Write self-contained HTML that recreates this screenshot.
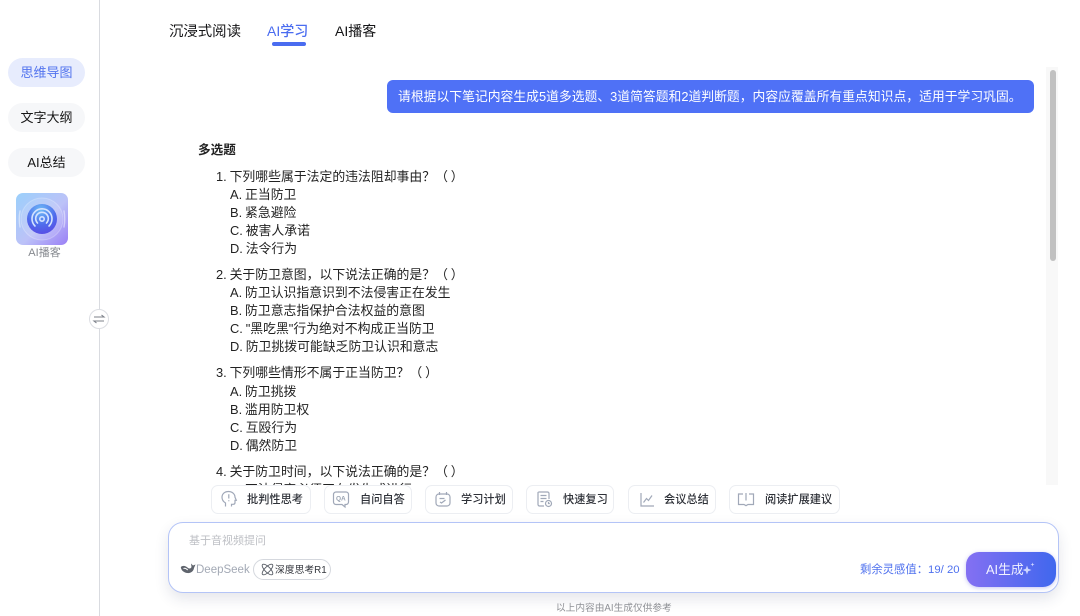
<!DOCTYPE html>
<html lang="zh"><head><meta charset="utf-8"><style>
html,body{margin:0;padding:0;background:#fff}
body{width:1080px;height:616px;overflow:hidden;position:relative;font-family:"Liberation Sans","Noto Sans CJK SC",sans-serif;color:#222}
.a{position:absolute;white-space:nowrap}
.pill{position:absolute;left:8px;width:77px;height:29px;border-radius:15px;background:#f6f7f9;text-align:center;font-size:13px;line-height:30px;color:#161616}
.tab{position:absolute;top:21px;font-size:14px;line-height:20px;color:#141416;white-space:nowrap}
.l{position:absolute;font-size:12.850px;line-height:18px;white-space:nowrap;color:#222;left:230px;word-spacing:-.7px}
.chip{position:absolute;top:485px;height:27px;border:1px solid #eceef2;border-radius:7px;background:#fff;font-size:11.200px;line-height:28px;font-weight:500;color:#2e3138}
.chip span{position:absolute;white-space:nowrap}
.chip svg{position:absolute;top:3px;fill:none;stroke:#a0a8b8;stroke-width:1.2}
</style></head><body>
<div class="a" style="left:99px;top:0;width:1px;height:616px;background:#d9dbe0"></div>
<div class="pill" style="top:58px;background:#e7ecfd;color:#5273ee">思维导图</div>
<div class="pill" style="top:103px">文字大纲</div>
<div class="pill" style="top:148px">AI总结</div>
<svg class="a" style="left:16px;top:193px" width="52" height="52" viewBox="0 0 52 52">
<defs><linearGradient id="g" x1="0" y1="0" x2="1" y2="1"><stop offset="0" stop-color="#9bd0fb"/><stop offset=".55" stop-color="#bcc2f8"/><stop offset="1" stop-color="#9a7ff5"/></linearGradient>
<radialGradient id="h" cx=".45" cy=".2" r=".9"><stop offset="0" stop-color="#6fbcf6"/><stop offset=".55" stop-color="#4f6cec"/><stop offset="1" stop-color="#5a45e4"/></radialGradient></defs>
<rect width="52" height="52" rx="7" fill="url(#g)"/>
<circle cx="26" cy="26" r="21" fill="#fff" fill-opacity=".12" stroke="#fff" stroke-opacity=".25"/>
<circle cx="26" cy="26" r="15" fill="url(#h)"/>
<g fill="none" stroke="#d5e3ff" stroke-width="1.6" stroke-linecap="round"><circle cx="26" cy="26" r="2.2"/><path d="M21.500 30a6.300 6.300 0 1 1 9 0"/><path d="M19 33a10 10 0 1 1 14 0"/></g>
<g fill="none" stroke="#fff" stroke-opacity=".45" stroke-width="1.4" stroke-linecap="round"><path d="M4 18q-1.500 8 0 16M48 18q1.500 8 0 16"/></g>
</svg>
<div class="a" style="left:16px;width:57px;top:246px;text-align:center;font-size:11px;line-height:15px;color:#85888e">AI播客</div>
<svg class="a" style="left:89px;top:309px" width="20" height="20" viewBox="0 0 20 20"><circle cx="10" cy="10" r="9.500" fill="#fff" stroke="#dcdee3"/><g fill="none" stroke="#7d818a" stroke-width="1.100"><path d="M5 8h10l-2.500-2"/><path d="M15 12H5l2.500 2"/></g></svg>

<div class="tab" style="left:169px;top:22px;font-size:14.400px">沉浸式阅读</div>
<div class="tab" style="left:267px;color:#4a6cf0;font-weight:500">AI学习</div>
<div class="a" style="left:272px;top:42px;width:34px;height:3.500px;border-radius:2px;background:#4a6cf0"></div>
<div class="tab" style="left:335px">AI播客</div>

<div class="a" style="left:387px;top:80px;width:647px;height:33px;border-radius:6px;background:#4f71f6;color:#fff;font-size:12.820px;line-height:34px;text-indent:11px">请根据以下笔记内容生成5道多选题、3道简答题和2道判断题，内容应覆盖所有重点知识点，适用于学习巩固。</div>
<div class="a" style="left:1046px;top:67px;width:12px;height:418px;background:#f8f8f8"></div>
<div class="a" style="left:1050px;top:70px;width:6px;height:191px;border-radius:3px;background:#c1c1c1"></div>

<div class="a" style="left:0;top:0;width:1040px;height:485px;overflow:hidden">
<div class="a" style="left:0;top:1px;width:1040px;height:500px">
<div class="l" style="left:198px;top:140px;font-weight:700;font-size:12.600px">多选题</div>
<div class="l" style="left:216px;top:167px">1. 下列哪些属于法定的违法阻却事由？（ ）</div>
<div class="l" style="top:185px">A. 正当防卫</div>
<div class="l" style="top:203px">B. 紧急避险</div>
<div class="l" style="top:221px">C. 被害人承诺</div>
<div class="l" style="top:239px">D. 法令行为</div>
<div class="l" style="left:216px;top:265px">2. 关于防卫意图，以下说法正确的是？（ ）</div>
<div class="l" style="top:283px">A. 防卫认识指意识到不法侵害正在发生</div>
<div class="l" style="top:301px">B. 防卫意志指保护合法权益的意图</div>
<div class="l" style="top:319px">C. "黑吃黑"行为绝对不构成正当防卫</div>
<div class="l" style="top:337px">D. 防卫挑拨可能缺乏防卫认识和意志</div>
<div class="l" style="left:216px;top:363px">3. 下列哪些情形不属于正当防卫？（ ）</div>
<div class="l" style="top:382px">A. 防卫挑拨</div>
<div class="l" style="top:400px">B. 滥用防卫权</div>
<div class="l" style="top:418px">C. 互殴行为</div>
<div class="l" style="top:436px">D. 偶然防卫</div>
<div class="l" style="left:216px;top:462px">4. 关于防卫时间，以下说法正确的是？（ ）</div>
<div class="l" style="top:480px">A. 不法侵害必须正在发生或进行</div>
</div></div>

<div class="chip" style="left:211px;width:98px"><svg style="left:7px" width="20" height="20" viewBox="0 0 20 20"><path d="M6.500 17.500v-3.500C4.300 12.700 3 10.700 3 8.300 3 4.800 5.800 2.500 9.500 2.500s6.500 2.500 6.500 5.800l1.300 3H16v2.500c0 1-.8 1.500-1.800 1.500H12.500v2.200"/><path d="M9.800 5.300v4.200M9.800 11.200v1"/></svg><span style="left:35px">批判性思考</span></div>
<div class="chip" style="left:324px;width:86px"><svg style="left:6px" width="20" height="20" viewBox="0 0 20 20"><path d="M5 3h10a2.500 2.500 0 0 1 2.500 2.500v7.500a2.500 2.500 0 0 1-2.500 2.500h-1V18L11 15.500H5A2.500 2.500 0 0 1 2.500 13V5.500A2.500 2.500 0 0 1 5 3z"/><text x="5" y="11.500" font-size="6.500" font-weight="700" fill="#9aa3b2" stroke="none" font-family="Liberation Sans">QA</text></svg><span style="left:35px">自问自答</span></div>
<div class="chip" style="left:425px;width:86px"><svg style="left:7px" width="20" height="20" viewBox="0 0 20 20"><rect x="3" y="5" width="14" height="12" rx="3"/><path d="M6.500 3v3M13.500 3v3M6.500 9.500h5M7 13l1.500 1 4-3"/></svg><span style="left:35px">学习计划</span></div>
<div class="chip" style="left:526px;width:86px"><svg style="left:8px" width="20" height="20" viewBox="0 0 20 20"><path d="M9 17H4.500A1.500 1.500 0 0 1 3 15.500v-12A1.500 1.500 0 0 1 4.500 3h8A1.500 1.500 0 0 1 14 4.500V10"/><path d="M5.500 6.500h6M5.500 9.500h6M5.500 12.500h3"/><circle cx="13.500" cy="14.500" r="3"/><path d="M13.500 13v1.500h1.300"/></svg><span style="left:36px">快速复习</span></div>
<div class="chip" style="left:628px;width:86px"><svg style="left:9px" width="20" height="20" viewBox="0 0 20 20"><path d="M3 4v13h13M5.500 13.500l3-4 2 2 3.500-5"/></svg><span style="left:35px">会议总结</span></div>
<div class="chip" style="left:729px;width:109px"><svg style="left:6px" width="20" height="20" viewBox="0 0 20 20"><path d="M7 5H2.500v10.500H8l2 1.200 2-1.200h5.500V5H13"/><path d="M10 4v7.500"/></svg><span style="left:35px">阅读扩展建议</span></div>

<div class="a" style="left:168px;top:522px;width:889px;height:69px;border:1px solid #b4c4f7;border-radius:15px;background:#fff;box-shadow:0 6px 14px rgba(40,50,90,.12)"></div>
<div class="a" style="left:189px;top:533px;font-size:11px;line-height:16px;color:#bdbfc4">基于音视频提问</div>
<svg class="a" style="left:180px;top:562px" width="16" height="14" viewBox="0 0 16 14"><path d="M.8 5C3 3 6 4 8 6c1.500 1 3 .5 3.500-1L11 1.500l2 2 2.500-1L14 6c-.5 3.500-3.500 5.500-7 5C3.500 10.500 1 8 .8 5z" fill="#5f646d"/><path d="M3.500 6.500c1.500-.7 3 .3 4.200 1.500" fill="none" stroke="#fff" stroke-width="1"/></svg>
<div class="a" style="left:196px;top:562px;font-size:11.500px;line-height:16px;color:#a3a9b5">DeepSeek</div>
<div class="a" style="left:253px;top:559px;width:76px;height:19px;border:1px solid #d5d8de;border-radius:11px;background:#fff"></div>
<svg class="a" style="left:261px;top:563px" width="13" height="13" viewBox="0 0 13 13" fill="none" stroke="#555a63" stroke-width=".9"><ellipse cx="6.500" cy="6.500" rx="7" ry="2.700" transform="rotate(45 6.500 6.500)"/><ellipse cx="6.500" cy="6.500" rx="7" ry="2.700" transform="rotate(-45 6.500 6.500)"/></svg>
<div class="a" style="left:275px;top:563px;font-size:9.800px;line-height:16px;color:#33363d">深度思考R1</div>
<div class="a" style="left:860px;top:562px;font-size:11.350px;line-height:17px;color:#4f71ee">剩余灵感值：19/ 20</div>
<div class="a" style="left:966px;top:552px;width:90px;height:35px;border-radius:13px;background:linear-gradient(90deg,#8470f2,#4067ee);box-shadow:0 1px 4px rgba(90,90,220,.35)"></div>
<div class="a" style="left:986px;top:560px;font-size:12.800px;line-height:19px;color:#f2f3ff">AI生成</div>
<svg class="a" style="left:1022px;top:562px" width="13" height="13" viewBox="0 0 13 13" fill="#cdd5ff"><path d="M5 3.500l1.200 3.300 3.300 1.200-3.300 1.200L5 12.500 3.800 9.200.5 8l3.300-1.200z"/><path d="M10.500 .5l.5 1.500 1.500.5-1.500.5-.5 1.500-.5-1.500-1.500-.5 1.500-.5z"/></svg>
<div class="a" style="left:556px;top:601px;font-size:9.700px;line-height:15px;color:#8f9196">以上内容由AI生成仅供参考</div>
</body></html>
